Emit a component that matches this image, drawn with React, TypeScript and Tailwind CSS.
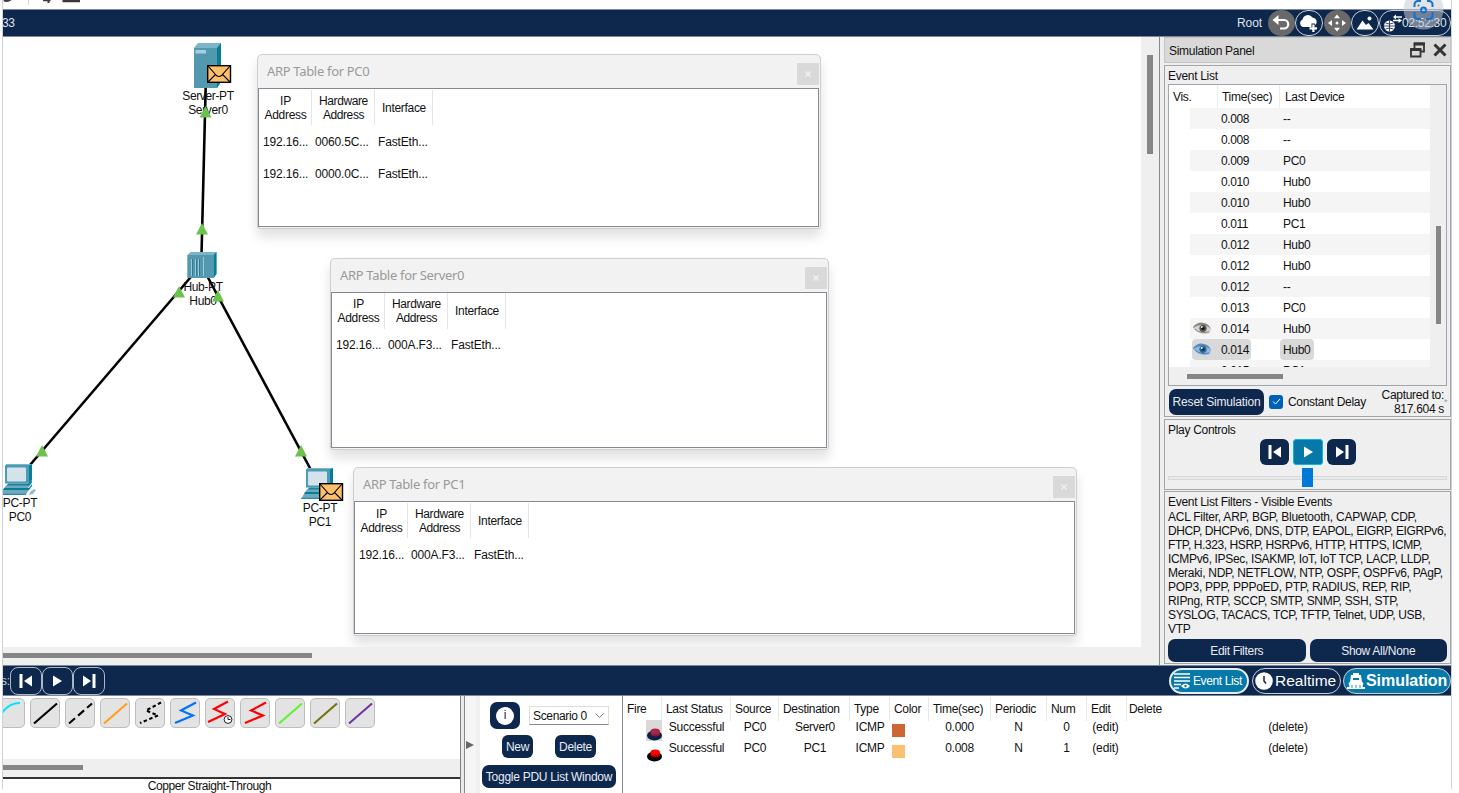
import type { ReactNode } from "react";

const NAVY = "#0d274d";

/* ---------- canvas drawings ---------- */

function Envelope({ x, y }: { x: number; y: number }) {
  return (
    <g transform={`translate(${x} ${y})`}>
      <rect x="0.7" y="0.7" width="22.8" height="16.6" fill="#fdc06a" stroke="#000" strokeWidth="1.4" />
      <path d="M1 1l8.5 9.5q2.5 2 5 0L23 1M1 17l7.5-7.5M23 17l-7.5-7.5" fill="none" stroke="#000" strokeWidth="1.1" />
    </g>
  );
}

function Pc({ x, y }: { x: number; y: number }) {
  return (
    <g transform={`translate(${x} ${y})`}>
      <path d="M4 2l2-2h25v16l-3 4z" fill="#087d97" />
      <path d="M4 1.5l2-1.5h25l-3 1.5z" fill="#7bb6c8" />
      <rect x="4" y="1.5" width="24" height="18" fill="#4d9cb5" />
      <rect x="6" y="3.5" width="19" height="14" rx="1" fill="#d3e3e9" />
      <path d="M7 19.500h21l3-3v2l-3 4H5z" fill="#1d809a" />
      <path d="M5 21.500h24l-2 2.500H3z" fill="#6fa9bd" />
      <path d="M3 24h25l3-4v2l-3 4H2z" fill="#087d97" />
      <path d="M2 26h26l-3.500 5H-1z" fill="#6fa9bd" />
      <path d="M-.3 29.800H25.300L24.500 31H-1z" fill="#2f87a0" />
      <path d="M29 28l4-3 2 1-3 4-4 1z" fill="#8dbccb" />
    </g>
  );
}

function Tri({ x, y }: { x: number; y: number }) {
  return <path d={`M${x} ${y - 6}l6 11.500h-12z`} fill="#6cc24a" />;
}

function Topology() {
  return (
    <svg className="absolute inset-0" width="1138" height="610" viewBox="3 37 1138 610">
      <g stroke="#000" strokeWidth="2.6">
        <path d="M205.700 86L201.500 255" />
        <path d="M196 271L30 465" />
        <path d="M205 272L311 470" />
      </g>
      <path d="M194 48l4-5h23v39l-4 6h-23z" fill="#7bb6c8" />
      <path d="M217 48l4-5v39l-4 6z" fill="#087d97" />
      <rect x="194" y="48" width="23" height="40" fill="#5299b0" />
      <rect x="195.500" y="50" width="10.500" height="3.500" fill="#a9cedb" />
      <path d="M187.500 255l3-3h26v22l-3 4h-26z" fill="#7bb6c8" />
      <path d="M213.500 255l3-3v22l-3 4z" fill="#087d97" />
      <rect x="187.500" y="255" width="26" height="23" fill="#5299b0" />
      <path d="M191.500 259v17M195.500 259v17M198.500 259v17M203.500 257v19" stroke="#9cc7d5" strokeWidth="1" />
      <path d="M192.500 259v17M196.500 259v17M199.500 259v17" stroke="#27738b" strokeWidth="0.800" />
      <Pc x={1} y={464} />
      <Pc x={302} y={468} />
      <Envelope x={207} y={65} />
      <Envelope x={319} y={483} />
    </svg>
  );
}

function Arrows() {
  return (
    <svg className="absolute inset-0" width="1138" height="610" viewBox="3 37 1138 610">
      <Tri x={205.500} y={112} />
      <Tri x={202} y={229} />
      <Tri x={179} y={292} />
      <Tri x={218} y={296} />
      <Tri x={42} y={451} />
      <Tri x={301} y={451} />
    </svg>
  );
}

function NodeLabel({ pos, a, b }: { pos: string; a: string; b: string }) {
  return (
    <div className={`absolute w-20 text-center leading-[14px] tracking-[-0.35px] ${pos}`}>
      <div>{a}</div>
      <div>{b}</div>
    </div>
  );
}

function ArpWindow({ title, pos, body, rows }: { title: string; pos: string; body: string; rows: string[][] }) {
  return (
    <div
      className={`absolute flex flex-col rounded-t-[5px] rounded-b-[3px] border border-[#cfcfcf] bg-[#f2f2f2] pr-px pb-px shadow-[0_8px_12px_rgba(0,0,0,0.12)] ${pos}`}
    >
      <div className="flex h-[33px] shrink-0 items-center justify-between pl-[9px]">
        <span className="mb-[2px] font-['Noto_Sans'] text-[13px] tracking-[-0.32px] text-[#999999]">{title}</span>
        <span className="mt-1 flex size-[22px] items-center justify-center bg-[#d9d9d9] text-white">
          <svg width="6" height="6" viewBox="0 0 6 6">
            <path d="M.5 .5l5 5M5.500 .5l-5 5" stroke="#f2f2f2" strokeWidth="1.200" />
          </svg>
        </span>
      </div>
      <div className="flex-1 border border-[#868993] bg-white">
        <div className={`grid h-9 grid-cols-[53px_63px_58px] text-center leading-[14px] ${body}`}>
          <div className="flex items-center justify-center border-r border-[#e5e5e5] pl-px">IP<br />Address</div>
          <div className="flex items-center justify-center border-r border-[#e5e5e5] pl-px tracking-[-0.4px]">Hardware<br />Address</div>
          <div className="flex items-center justify-center border-r border-[#e5e5e5] pl-px">Interface</div>
        </div>
        {rows.map((r, i) => (
          <div key={i} className={`grid h-8 grid-cols-[52px_63px_80px] items-center pl-[4px] ${body}`}>
            {r.map((c, j) => (
              <span key={j} className="tracking-[-0.16px]">{c}</span>
            ))}
          </div>
        ))}
      </div>
    </div>
  );
}

/* ---------- toolbar icons ---------- */

function Round({ gray, children }: { gray?: boolean; children: ReactNode }) {
  return (
    <span
      className={
        gray
          ? "mx-[0.5px] flex h-[26px] w-[27px] items-center justify-center rounded-full bg-[#696969]"
          : "flex h-[26px] w-[28px] items-center justify-center rounded-full border border-[#c9d0da]"
      }
    >
      {children}
    </span>
  );
}

function TopBar() {
  return (
    <div className="flex h-7 shrink-0 items-center justify-between border-y border-[#7c8797] bg-[#0d274d] text-[#dfe4ea]">
      <span className="-ml-px">33</span>
      <div className="flex items-center">
        <span className="mr-[5px] tracking-[-0.1px]">Root</span>
        <Round gray>
          <svg width="20" height="18" viewBox="0 0 20 18" fill="none" stroke="#fff" strokeWidth="2.200">
            <path d="M4 6h9a4 4 0 010 8.500H9" />
            <path d="M7.500 1L1.500 6L7.500 11z" fill="#fff" stroke="none" />
          </svg>
        </Round>
        <Round>
          <svg width="20" height="19" viewBox="0 0 20 19" fill="#fff">
            <path d="M4 13a4 4 0 01-.5-7.500A5.500 5.500 0 0113.500 3.500a4.500 4.500 0 013.500 7h-1v-1h-3.500v3.500z" />
            <path d="M13.300 10.500h2.200v2.700H18v2.200h-2.500V18h-2.200v-2.600H10.500v-2.200h2.800z" />
          </svg>
        </Round>
        <Round gray>
          <svg width="20" height="20" viewBox="0 0 20 20" fill="#fff">
            <circle cx="10" cy="10" r="1.500" />
            <path d="M10 1.500l3 3.800h-6zM10 18.500l3-3.800h-6zM1 10l4-3v6zM19 10l-4-3v6z" />
          </svg>
        </Round>
        <Round>
          <svg width="18" height="16" viewBox="0 0 18 16" fill="#fff">
            <path d="M0.500 14.500L6.500 5.500l3.500 4.500L12.500 8l5 6.500z" />
            <circle cx="13.500" cy="3.500" r="2" />
          </svg>
        </Round>
        <span className="flex h-[26px] w-[72px] items-center rounded-full border border-[#c9d0da] pl-[3px]">
          <svg width="20" height="20" viewBox="0 0 20 20" fill="none">
            <circle cx="6.500" cy="13" r="5.500" fill="#fff" />
            <path d="M1 13h11M6.500 7.500v11M2.500 10q4 2 8 0M2.500 16q4-2 8 0" stroke={NAVY} strokeWidth="0.800" />
            <path d="M11 4h8M10 7.500h7" stroke="#fff" strokeWidth="1.300" />
            <path d="M13 1.500l-3 2.500L13 6.500zM15.500 5.200L19 7.500l-3.500 2.400z" fill="#fff" />
          </svg>
          <span className="-ml-px">02:52:30</span>
        </span>
      </div>
    </div>
  );
}

function CaptureBadge() {
  return (
    <svg className="absolute left-[1402px] top-[-10px]" width="44" height="44" viewBox="0 0 44 44" fill="none">
      <circle cx="21.500" cy="19.500" r="20" fill="#c6ccd6" fillOpacity="0.550" />
      <path d="M12.500 17v-2.500a3.500 3.500 0 013.500-3.500h3M25 11h2a3.500 3.500 0 013.500 3.500V17M30.500 22v3.500a3.500 3.500 0 01-3.500 3.500h-3M19 29h-3a3.500 3.500 0 01-3.500-3.500V22" stroke="#1470cc" strokeWidth="2" />
      <circle cx="21.500" cy="20" r="2.500" stroke="#1470cc" strokeWidth="1.800" />
      <circle cx="16.500" cy="15.500" r="1" fill="#1470cc" />
    </svg>
  );
}

/* ---------- simulation panel ---------- */

const events: [string, string][] = [
  ["0.008", "--"], ["0.008", "--"], ["0.009", "PC0"], ["0.010", "Hub0"], ["0.010", "Hub0"], ["0.011", "PC1"],
  ["0.012", "Hub0"], ["0.012", "Hub0"], ["0.012", "--"], ["0.013", "PC0"], ["0.014", "Hub0"], ["0.014", "Hub0"], ["0.015", "PC1"],
];

function Eye({ blue }: { blue?: boolean }) {
  return (
    <svg width="18" height="13" viewBox="0 0 18 13">
      <path d="M0 6Q3 1 9 1q6 0 9 6l-1 4q-8 3-14-2z" fill={blue ? "#8db9e0" : "#d5d3d0"} />
      <path d="M0 5Q5-1 11 1q5 1 7 6Q14 3 9 3 4 3 0 6z" fill={blue ? "#5689b6" : "#8b8782"} />
      <path d="M2 7q5 5 14 3" stroke={blue ? "#4e82b1" : "#8b8782"} fill="none" />
      <circle cx="10" cy="6.300" r="3.600" fill={blue ? "#316594" : "#56524f"} />
      <circle cx="10" cy="6.300" r="1.600" fill={blue ? "#0c3154" : "#111"} />
      <circle cx="8.800" cy="5" r="0.900" fill="#fff" />
    </svg>
  );
}

function EventTable() {
  return (
    <div className="mx-[3px] h-[302px] border border-[#a0a4ad] bg-[#efefef]">
      <div className="flex h-[282px]">
        <div className="flex w-[261px] flex-col overflow-hidden bg-white">
          <div className="grid h-[23px] shrink-0 grid-cols-[49px_62px_1fr] items-center">
            <span className="h-full border-r border-[#ececec] pl-1 leading-6">Vis.</span>
            <span className="h-full border-r border-[#ececec] pl-[4px] leading-6">Time(sec)</span>
            <span className="h-full pl-[5px] leading-6">Last Device</span>
          </div>
          {events.map(([t, d], i) => (
            <div
              key={i}
              className={`ml-[21px] flex h-[21px] shrink-0 items-center ${i % 2 === 0 ? "bg-[#f5f5f5]" : ""}`}
            >
              <span className={`flex h-full items-center ${i === 11 ? "ml-0.5 w-[26px] rounded-l bg-[#d9d9d9] pl-px" : "w-7 pl-[3px]"}`}>
                {i === 10 && <Eye />}
                {i === 11 && <Eye blue />}
              </span>
              <span className={`flex h-full w-[33px] items-center pl-[3px] tracking-[-0.42px] ${i === 11 ? "rounded-r bg-[#d9d9d9]" : ""}`}>{t}</span>
              <span className={`ml-[29px] flex h-full items-center px-[3px] ${i === 11 ? "rounded-sm bg-[#d9d9d9]" : ""}`}>{d}</span>
            </div>
          ))}
        </div>
        <div className="flex-1 pl-[6px] pt-[141px]">
          <div className="h-[98px] w-[5px] bg-[#868686]" />
        </div>
      </div>
      <div className="pl-[18px] pt-[7px]">
        <div className="h-[5px] w-[96px] bg-[#868686]" />
      </div>
    </div>
  );
}

function Transport({ kind }: { kind: "back" | "play" | "next" }) {
  if (kind === "play")
    return (
      <svg width="14" height="14" viewBox="0 0 14 14" fill="#fff">
        <path d="M3 1.500l9 5.500-9 5.500z" />
      </svg>
    );
  return (
    <svg width="14" height="14" viewBox="0 0 14 14" fill="#fff" className={kind === "next" ? "rotate-180" : ""}>
      <path d="M.5 0h3v14h-3zM13 1.500v11L5 7z" />
    </svg>
  );
}

const filterLines: [string, string][] = [
  ["ACL Filter, ARP, BGP, Bluetooth, CAPWAP, CDP,", "tracking-[-0.24px]"],
  ["DHCP, DHCPv6, DNS, DTP, EAPOL, EIGRP, EIGRPv6,", "tracking-[-0.39px]"],
  ["FTP, H.323, HSRP, HSRPv6, HTTP, HTTPS, ICMP,", "tracking-[-0.41px]"],
  ["ICMPv6, IPSec, ISAKMP, IoT, IoT TCP, LACP, LLDP,", "tracking-[-0.34px]"],
  ["Meraki, NDP, NETFLOW, NTP, OSPF, OSPFv6, PAgP,", "tracking-[-0.3px]"],
  ["POP3, PPP, PPPoED, PTP, RADIUS, REP, RIP,", "tracking-[-0.26px]"],
  ["RIPng, RTP, SCCP, SMTP, SNMP, SSH, STP,", "tracking-[-0.3px]"],
  ["SYSLOG, TACACS, TCP, TFTP, Telnet, UDP, USB,", "tracking-[-0.32px]"],
  ["VTP", "tracking-[-0.3px]"],
];

function SimulationPanel() {
  return (
    <div className="flex w-[287px] shrink-0 flex-col">
      <div className="flex h-[26px] items-center justify-between border border-[#c4c4c4] bg-[#d9d9d9] pl-1 pr-[3px]">
        <span className="pt-0.5">Simulation Panel</span>
        <span className="flex items-center gap-2">
          <svg width="15" height="16" viewBox="0 0 15 16" fill="none" stroke="#333">
            <path d="M4.500 6V1.500h9.500V9.500h-3" strokeWidth="1.800" />
            <path d="M3.800 2h11" strokeWidth="3" />
            <path d="M1 7.500h9.500v7H1z" strokeWidth="1.800" />
            <path d="M.2 7.500H11.300" strokeWidth="3" />
          </svg>
          <svg width="14" height="14" viewBox="0 0 14 14" stroke="#333" strokeWidth="3">
            <path d="M1.500 1.500l11 11M12.500 1.500l-11 11" />
          </svg>
        </span>
      </div>
      <div className="mt-[2px] h-[352px] border border-[#a5a5a5]">
        <div className="h-[18px] pl-[3px] leading-[21px]">Event List</div>
        <EventTable />
        <div className="flex h-[30px] items-center pl-[4px] pr-[6px] pt-px">
          <span className="flex h-[26px] w-[95px] items-center justify-center rounded-[7px] bg-[#0d274d] tracking-[-0.18px] text-[#e8ecf2]">Reset Simulation</span>
          <span className="ml-[5px] flex size-[14px] items-center justify-center rounded-[3px] bg-[#0061b8]">
            <svg width="9" height="7" viewBox="0 0 9 7" fill="none" stroke="#fff"><path d="M1 3.500L3.500 6 8 1" /></svg>
          </span>
          <span className="ml-[5px]">Constant Delay</span>
          <span className="ml-auto text-right leading-[14px]">Captured to:<br />817.604 s</span>
          <span className="-mr-[5px] w-[5px] text-[9px] text-[#999]">*</span>
        </div>
      </div>
      <div className="mt-[2px] h-[71px] border border-[#a5a5a5]">
        <div className="h-[19px] pl-[3px] leading-[20px]">Play Controls</div>
        <div className="flex justify-center gap-1 pl-px">
          <span className="flex h-[26px] w-[29px] items-center justify-center rounded-[6px] bg-[#0d274d]"><Transport kind="back" /></span>
          <span className="flex h-[26px] w-[30px] items-center justify-center rounded-[3px] border border-[#08b4e8] bg-[#0779a9]"><Transport kind="play" /></span>
          <span className="flex h-[26px] w-[29px] items-center justify-center rounded-[6px] bg-[#0d274d]"><Transport kind="next" /></span>
        </div>
        <div className="mx-[3px] mt-[3px] flex h-[19px] items-center justify-center">
          <div className="h-1 flex-1 border border-r-0 border-[#d8dada] bg-[#e7eaea]" />
          <div className="h-[19px] w-[11px] bg-[#0078d7]" />
          <div className="h-1 w-[134px] border border-l-0 border-[#d8dada] bg-[#e7eaea]" />
        </div>
      </div>
      <div className="mt-[1px] flex h-[173px] flex-col border border-[#a5a5a5] pl-[3px] pr-[3px]">
        <div className="h-[18px] leading-[20px]">Event List Filters - Visible Events</div>
        <div className="leading-[14px]">
          {filterLines.map(([l, fit]) => (
            <div key={l} className={`whitespace-nowrap ${fit}`}>{l}</div>
          ))}
        </div>
        <div className="flex gap-[4px] pt-[3px] text-[#e8ecf2]">
          <span className="flex h-[23px] flex-1 items-center justify-center rounded-[7px] bg-[#0d274d]">Edit Filters</span>
          <span className="flex h-[23px] flex-1 items-center justify-center rounded-[7px] bg-[#0d274d]">Show All/None</span>
        </div>
      </div>
    </div>
  );
}

/* ---------- lower bar and panels ---------- */

function ModeBar() {
  return (
    <div className="flex h-[31px] shrink-0 items-center justify-between border-y border-[#7c8797] bg-[#0d274d] text-white">
      <div className="flex items-center">
        <span className="-ml-[2px] w-[9px] whitespace-nowrap text-[#c9d0da]">s:</span>
        {(["back", "play", "next"] as const).map((k) => (
          <span key={k} className="flex h-[28px] w-[31.500px] items-center justify-center rounded-[8px] border border-[#aeb7c5]">
            <Transport kind={k} />
          </span>
        ))}
      </div>
      <div className="flex items-center">
        <span className="mr-[3px] flex h-[26px] w-[80px] items-center rounded-[13px] border-2 border-[#e6edf3] bg-[#0779a9] pl-[3px]">
          <svg width="17" height="18" viewBox="0 0 17 18" fill="none" stroke="#fff" strokeWidth="1.600" className="shrink-0">
            <path d="M0 2h16M0 5.500h16M0 9h16M0 12.500h7M0 16h5" />
            <path d="M7 14q4.500-5 9 0q-4.500 5-9 0z" fill="#fff" stroke="none" />
            <circle cx="11.500" cy="14" r="1.200" fill="#0779a9" stroke="none" />
          </svg>
          <span className="ml-[2px] whitespace-nowrap tracking-[-0.38px]">Event List</span>
        </span>
        <span className="mr-[2px] flex h-[26px] w-[89px] items-center rounded-[13px] border border-[#c9d0da] pl-[2px] text-[15.500px] tracking-[0px]">
          <svg width="18" height="18" viewBox="0 0 18 18" className="mr-[2px] shrink-0">
            <circle cx="9" cy="9" r="8.800" fill="#fff" />
            <path d="M9 4v5l2 2.500" stroke={NAVY} strokeWidth="1.500" fill="none" />
          </svg>
          Realtime
        </span>
        <span className="flex h-[26px] w-[108px] items-center rounded-[13px] border border-[#c9d0da] bg-[#0779a9] pl-[3px] text-[16px] font-bold tracking-[-0.05px]">
          <svg width="18" height="18" viewBox="0 0 18 18" className="mr-[1px] shrink-0" fill="#fff">
            <path d="M6 1h6v2h2l1 7 1.500 1-1 4H18v2H0v-2h2.500l-1-4L3 10l1-7h2z" />
            <path d="M6 6h6v2H6z" fill="#0779a9" />
            <path d="M5 13v3M9 13v3M13 13v3" stroke="#0779a9" strokeWidth="0.800" />
          </svg>
          Simulation
        </span>
      </div>
    </div>
  );
}

const zig = "M26 4.500L11 12.500L23 17.500L5 25";
const straight = "M4 25.500L27 5.500";

const cables: { d: string; color: string; dash?: string; clock?: boolean }[] = [
  { d: "M1 28Q8 5 25 5", color: "#00e5ff" },
  { d: straight, color: "#000" },
  { d: straight, color: "#000", dash: "8 4" },
  { d: straight, color: "#ff9f1a" },
  { d: zig, color: "#000", dash: "3.500 2.500" },
  { d: zig, color: "#0070ff" },
  { d: "M23 3.500L9 11L20 16L3 24", color: "#f00", clock: true },
  { d: zig, color: "#f00" },
  { d: straight, color: "#5cf32f" },
  { d: straight, color: "#77700c" },
  { d: straight, color: "#6f35a5" },
];

function CablePicker() {
  return (
    <div className="flex w-[458px] shrink-0 flex-col overflow-hidden border-r border-[#808080] bg-white">
      <div className="-ml-2 flex h-[63px] shrink-0 gap-[5px] pt-[2px]">
        {cables.map((c, i) => (
          <span key={i} className="size-[30px] shrink-0 rounded-[5px] border border-[#bdbdbd] bg-[#e3e3e3]">
            <svg width="28" height="28" viewBox="1 1 28 28" fill="none">
              <path d={c.d} stroke={c.color} strokeWidth="2.100" strokeDasharray={c.dash} />
              {c.clock && (
                <g stroke="#222">
                  <circle cx="23" cy="21.500" r="3.900" fill="#fff" />
                  <path d="M23 19v2.500h2.500" />
                </g>
              )}
            </svg>
          </span>
        ))}
      </div>
      <div className="h-[18px] shrink-0 bg-[#efefef] pt-[6px]"><div className="h-[5px] w-[80px] bg-[#868686]" /></div>
      <div className="h-[16px] shrink-0 border-t-2 border-[#333] pr-[44px] text-center leading-[15px] tracking-[-0.4px]">
        Copper Straight-Through
      </div>
    </div>
  );
}

function Scenario() {
  return (
    <div className="w-[142px] shrink-0 pl-[2px] text-[#e8ecf2]">
      <div className="flex items-center pl-[8px] pt-[6px]">
        <span className="flex h-[27px] w-[30px] items-center justify-center rounded-[7px] bg-[#0d274d]">
          <span className="flex size-[18px] items-center justify-center rounded-full bg-white pb-px text-[12px] text-[#0d274d]">i</span>
        </span>
        <span className="ml-[9px] flex h-[19px] w-[80px] items-center justify-between border border-[#ddd] border-b-[#888] pl-[3px] pr-1 tracking-[-0.35px] text-[#111]">
          Scenario 0
          <svg width="9" height="6" viewBox="0 0 9 6" fill="none" stroke="#777"><path d="M.5 .5l4 4 4-4" /></svg>
        </span>
      </div>
      <div className="flex gap-[22px] pl-[20px] pt-[6px]">
        <span className="flex h-[23px] w-[31px] items-center justify-center rounded-[6px] bg-[#0d274d]">New</span>
        <span className="flex h-[23px] w-[41px] items-center justify-center rounded-[6px] bg-[#0d274d]">Delete</span>
      </div>
      <div className="mt-[7px] flex h-[23px] w-[134px] items-center justify-center rounded-[7px] bg-[#0d274d] tracking-[-0.26px]">Toggle PDU List Window</div>
    </div>
  );
}

const pduCols = "grid grid-cols-[39px_69px_48px_71px_40px_39px_62px_56px_40px_40px_1fr]";
const pduHeads = ["Fire", "Last Status", "Source", "Destination", "Type", "Color", "Time(sec)", "Periodic", "Num", "Edit", "Delete"];
const pdus = [
  { dst: "Server0", color: "bg-[#ce6633]", time: "0.000", num: "0" },
  { dst: "PC1", color: "bg-[#fbc070]", time: "0.008", num: "1" },
];

function PduTable() {
  return (
    <div className="flex-1 border-l border-[#868993] bg-white pt-[1px]">
      <div className={`${pduCols} h-[23px]`}>
        {pduHeads.map((h, i) => (
          <span key={h} className={`whitespace-nowrap leading-[24px] ${i < 10 ? "border-r border-[#e8e8e8] pl-[4px]" : "pl-[2px]"}`}>{h}</span>
        ))}
      </div>
      {pdus.map((p, i) => (
        <div key={i} className={`${pduCols} h-[21px] text-center leading-[14px]`}>
          <span className={`ml-[23px] flex items-end ${i === 0 ? "bg-[#d9d9d9]" : ""}`}>
            <svg width="16" height="14" viewBox="0 0 16 14">
              <ellipse cx="8.500" cy="8.500" rx="7.500" ry="5" fill={i ? "#000" : "#0b2144"} />
              <path d="M4.500 4.500v3.500q4.500 3 9.500 0V4.500z" fill={i ? "#a00" : "#77203c"} />
              <ellipse cx="9.200" cy="4.500" rx="4.800" ry="3" fill={i ? "#f00" : "#ab2548"} />
            </svg>
          </span>
          <span className="tracking-[-0.25px]">Successful</span>
          <span>PC0</span>
          <span className="pl-px">{p.dst}</span>
          <span>ICMP</span>
          <span className="pl-[2px] pt-[4px]"><span className={`block size-[13px] ${p.color}`} /></span>
          <span className="pr-px">{p.time}</span>
          <span className="pr-px">N</span>
          <span className="pr-px">{p.num}</span>
          <span className="pr-[3px] tracking-[-0.15px]">(edit)</span>
          <span className="pr-[2px] tracking-[-0.15px]">(delete)</span>
        </div>
      ))}
    </div>
  );
}

export default function App() {
  return (
    <div className="relative h-[793px] w-[1459px] overflow-hidden bg-white pl-[2px] font-['Liberation_Sans',sans-serif] text-[12px] leading-[14px] tracking-[-0.3px] text-[#111]">
      <div className="flex h-full w-[1450px] flex-col rounded-b-[6px] border-x border-[#ccd3da]">
        <div className="h-[9px] shrink-0">
          <svg width="90" height="9" viewBox="3 0 90 9" fill="none" stroke="#3a3a3a">
            <path d="M4 0q3 2 7-1" strokeWidth="2.500" />
            <path d="M28.500 0v5" stroke="#d5d5d5" />
            <path d="M43 .5h7.500" strokeWidth="1.500" />
            <path d="M48.500 0v3" strokeWidth="2" />
            <path d="M62.500 .5h17.500" strokeWidth="3.500" />
          </svg>
        </div>
        <TopBar />
        <div className="flex h-[628px] shrink-0 bg-[#efefef]">
          <div className="mr-[4px] flex w-[1157px] shrink-0 flex-col border-r border-[#868993]">
            <div className="flex h-[610px]">
              <div className="relative w-[1138px] overflow-hidden bg-white">
                <Topology />
                <NodeLabel pos="left-[165px] top-[52px]" a="Server-PT" b="Server0" />
                <NodeLabel pos="left-[160px] top-[243px]" a="Hub-PT" b="Hub0" />
                <NodeLabel pos="left-[-23px] top-[459px]" a="PC-PT" b="PC0" />
                <NodeLabel pos="left-[277px] top-[464px]" a="PC-PT" b="PC1" />
                <Arrows />
                <ArpWindow
                  title="ARP Table for PC0"
                  pos="left-[254px] top-[17px] w-[564px] h-[175px]"
                  body="pt-px"
                  rows={[["192.16...", "0060.5C...", "FastEth..."], ["192.16...", "0000.0C...", "FastEth..."]]}
                />
                <ArpWindow
                  title="ARP Table for Server0"
                  pos="left-[327px] top-[221px] w-[499px] h-[192px]"
                  body="pt-0"
                  rows={[["192.16...", "000A.F3...", "FastEth..."]]}
                />
                <ArpWindow
                  title="ARP Table for PC1"
                  pos="left-[350px] top-[430px] w-[724px] h-[169px]"
                  body="pt-px"
                  rows={[["192.16...", "000A.F3...", "FastEth..."]]}
                />
              </div>
              <div className="flex-1 pl-[6px] pt-[18px]"><div className="h-[99px] w-[6px] bg-[#868686]" /></div>
            </div>
            <div className="pt-[6px]"><div className="h-[5px] w-[309px] bg-[#868686]" /></div>
          </div>
          <SimulationPanel />
        </div>
        <ModeBar />
        <div className="flex min-h-0 flex-1">
          <CablePicker />
          <div className="flex w-[19px] shrink-0 items-center border-r-4 border-[#f0f0f0] bg-[#e9e9e9] pl-[3px]">
            <span className="flex h-full flex-1 items-center border-l border-[#888] bg-[#f5f5f5] pl-px">
              <svg width="8" height="8" viewBox="0 0 8 8"><path d="M0 0l8 4-8 4z" fill="#666" /></svg>
            </span>
          </div>
          <Scenario />
          <PduTable />
        </div>
      </div>
      <CaptureBadge />
    </div>
  );
}
